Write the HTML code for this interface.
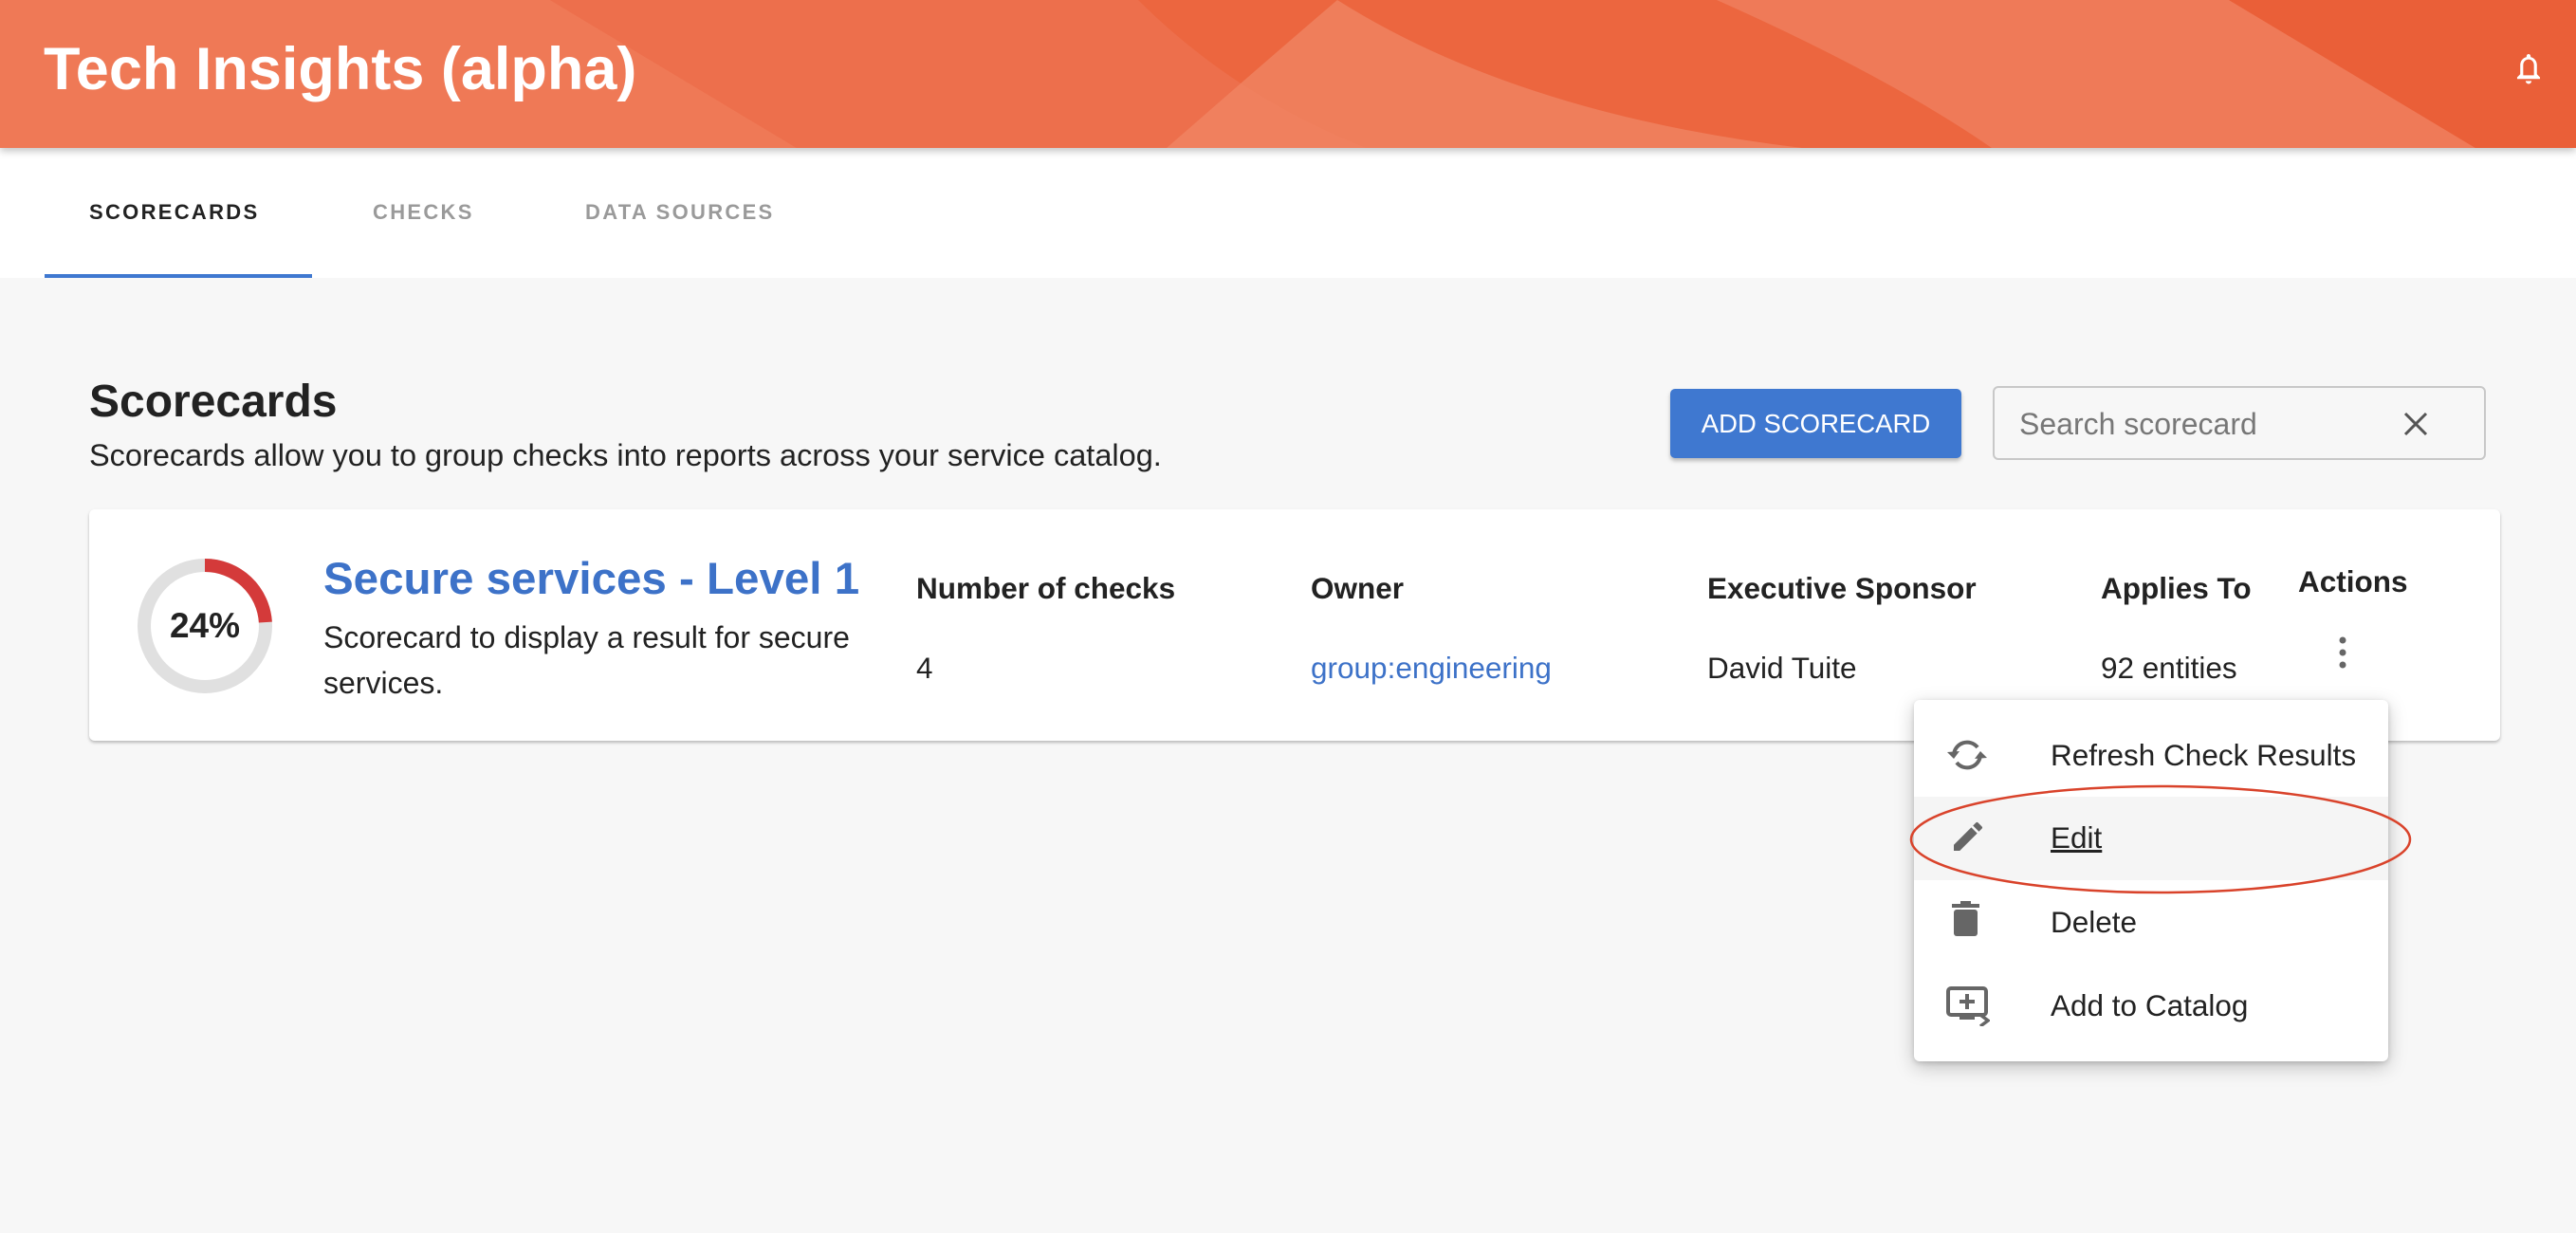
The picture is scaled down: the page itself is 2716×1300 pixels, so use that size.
<!DOCTYPE html>
<html><head><meta charset="utf-8"><style>
*{margin:0;padding:0;box-sizing:border-box}
body{width:2716px;height:1300px;background:#f7f7f7;font-family:"Liberation Sans",Arial,sans-serif;position:relative;overflow:hidden;color:#222}
.abs{position:absolute}
#hdr{left:0;top:0;width:2716px;height:156px;background:#ec663f;overflow:hidden;box-shadow:0 3px 8px rgba(0,0,0,.25);z-index:2}
#tabs{left:0;top:156px;width:2716px;height:137px;background:#fff}
.tab{top:211px;font-size:22px;font-weight:bold;letter-spacing:2.3px;color:#9a9a9a}
.card{left:94px;top:537px;width:2542px;height:244px;background:#fff;border-radius:6px;box-shadow:0 2px 3px rgba(0,0,0,.25)}
.h{font-size:31.5px;font-weight:bold;color:#222}
.v{font-size:31.5px;color:#222}
.menu{left:2018px;top:738px;width:500px;height:381px;background:#fff;border-radius:6px;box-shadow:0 6px 20px rgba(0,0,0,.22),0 2px 6px rgba(0,0,0,.15)}
.mi{font-size:31.5px;color:#222;left:144px}
</style></head><body>
<div id="hdr" class="abs">
<svg width="2716" height="156" style="position:absolute;left:0;top:0">
<path d="M0 0 H580 L840 156 H0 Z" fill="#f0805f" opacity=".75"/>
<path d="M580 0 H1200 Q1300 100 1440 156 H840 Z" fill="#ee7250" opacity=".8"/>
<path d="M1410 0 Q1340 60 1230 156 H1900 Q1600 120 1410 0Z" fill="#f08563" opacity=".8"/>
<path d="M1810 0 H2350 L2610 156 H2100 Q1990 80 1810 0Z" fill="#f0805f" opacity=".8"/>
<path d="M2350 0 H2716 V156 H2610 Z" fill="#ea5f38"/>
</svg>
<div class="abs" style="left:46px;top:37px;font-size:63px;font-weight:bold;color:#fff">Tech Insights (alpha)</div>
<svg class="abs" style="left:2649px;top:54px" width="34" height="40" viewBox="0 0 24 28"><path d="M12 2a1.5 1.5 0 0 0-1.5 1.5v.7C7.6 4.900 5.800 7.300 5.800 10.200v6.800L3.5 19.300v1.200h17v-1.200L18.200 17v-6.800c0-2.900-1.800-5.300-4.700-6V3.500A1.500 1.500 0 0 0 12 2z M12 6c2.300 0 4 1.800 4 4.200v7.600H8v-7.600C8 7.800 9.700 6 12 6z M9.800 22a2.200 2.200 0 0 0 4.400 0z" fill="#fff"/></svg>
</div>
<div id="tabs" class="abs"></div>
<div class="abs tab" style="left:94px;color:#222">SCORECARDS</div>
<div class="abs tab" style="left:393px">CHECKS</div>
<div class="abs tab" style="left:617px">DATA SOURCES</div>
<div class="abs" style="left:47px;top:289px;width:282px;height:4px;background:#3f78d0"></div>

<div class="abs" style="left:94px;top:396px;font-size:48px;font-weight:bold;color:#222">Scorecards</div>
<div class="abs" style="left:94px;top:462px;font-size:32.5px;color:#222">Scorecards allow you to group checks into reports across your service catalog.</div>
<div class="abs" style="left:1761px;top:410px;width:307px;height:73px;background:#3f78d0;border-radius:5px;box-shadow:0 3px 4px rgba(0,0,0,.25);color:#fff;font-size:27.5px;text-align:center;line-height:73px">ADD SCORECARD</div>
<div class="abs" style="left:2101px;top:407px;width:520px;height:78px;border:2px solid #c8c8c8;border-radius:6px;background:#f7f7f7">
<div class="abs" style="left:26px;top:20px;font-size:32px;color:#777">Search scorecard</div>
<svg class="abs" style="left:430px;top:24px" width="28" height="28" viewBox="0 0 28 28"><path d="M3 3L25 25M25 3L3 25" stroke="#555" stroke-width="3"/></svg>
</div>

<div class="abs card"></div>
<svg class="abs" style="left:144px;top:588px" width="144" height="144" viewBox="0 0 144 144">
<circle cx="72" cy="72" r="64" fill="none" stroke="#e0e0e0" stroke-width="14"/>
<circle cx="72" cy="72" r="64" fill="none" stroke="#d43a3a" stroke-width="14" stroke-dasharray="96.5 400" transform="rotate(-90 72 72)"/>
</svg>
<div class="abs" style="left:144px;top:639px;width:144px;text-align:center;font-size:37px;font-weight:bold;color:#222">24%</div>
<div class="abs" style="left:341px;top:583px;font-size:47.5px;font-weight:bold;color:#3d72c8">Secure services - Level 1</div>
<div class="abs" style="left:341px;top:648px;font-size:32px;line-height:48px;color:#222;width:700px">Scorecard to display a result for secure<br>services.</div>
<div class="abs h" style="left:966px;top:602px">Number of checks</div>
<div class="abs h" style="left:1382px;top:602px">Owner</div>
<div class="abs h" style="left:1800px;top:602px">Executive Sponsor</div>
<div class="abs h" style="left:2215px;top:602px">Applies To</div>
<div class="abs h" style="left:2423px;top:595px">Actions</div>
<div class="abs v" style="left:966px;top:686px">4</div>
<div class="abs v" style="left:1382px;top:686px;color:#3d72c8">group:engineering</div>
<div class="abs v" style="left:1800px;top:686px">David Tuite</div>
<div class="abs v" style="left:2215px;top:686px">92 entities</div>
<svg class="abs" style="left:2462px;top:670px" width="16" height="36"><circle cx="8" cy="5" r="3.5" fill="#666"/><circle cx="8" cy="18" r="3.5" fill="#666"/><circle cx="8" cy="31" r="3.5" fill="#666"/></svg>

<div class="abs menu">
<div class="abs" style="left:0;top:102px;width:500px;height:88px;background:#f5f5f5"></div>
<svg class="abs" style="left:34px;top:40px" width="44" height="36" viewBox="0 0 44 36"><path d="M8 18 A14 14 0 0 1 33 10" fill="none" stroke="#666" stroke-width="4"/><path d="M36 18 A14 14 0 0 1 11 26" fill="none" stroke="#666" stroke-width="4"/><path d="M1 15 L8 22 L14 14Z" fill="#666"/><path d="M43 21 L36 14 L30 22Z" fill="#666"/></svg>
<div class="abs mi" style="top:40px">Refresh Check Results</div>
<svg class="abs" style="left:37px;top:124px" width="40" height="40" viewBox="0 0 24 24"><path d="M3 17.25V21h3.75L17.81 9.94l-3.75-3.75L3 17.25zM20.71 7.04a1 1 0 0 0 0-1.41l-2.34-2.34a1 1 0 0 0-1.41 0l-1.83 1.83 3.75 3.75 1.83-1.83z" fill="#666"/></svg>
<div class="abs mi" style="top:127px;text-decoration:underline">Edit</div>
<svg class="abs" style="left:40px;top:212px" width="30" height="38" viewBox="0 0 30 38"><rect x="0" y="3" width="29" height="4" fill="#666"/><rect x="9" y="0" width="11" height="4" fill="#666"/><rect x="2" y="9" width="25" height="28" rx="3" fill="#666"/></svg>
<div class="abs mi" style="top:216px">Delete</div>
<svg class="abs" style="left:34px;top:302px" width="46" height="42" viewBox="0 0 46 42"><rect x="2" y="2" width="40" height="28" rx="3" fill="none" stroke="#666" stroke-width="4"/><path d="M22 8v16M14 16h16" stroke="#666" stroke-width="4"/><rect x="14" y="30" width="16" height="5" fill="#666"/><path d="M36 30l8 6-8 6" fill="none" stroke="#666" stroke-width="3.5"/></svg>
<div class="abs mi" style="top:304px">Add to Catalog</div>
</div>
<svg class="abs" style="left:2010px;top:824px" width="536" height="122"><ellipse cx="268" cy="61" rx="263" ry="56" fill="none" stroke="#d9432b" stroke-width="2.5"/></svg>
</body></html>
